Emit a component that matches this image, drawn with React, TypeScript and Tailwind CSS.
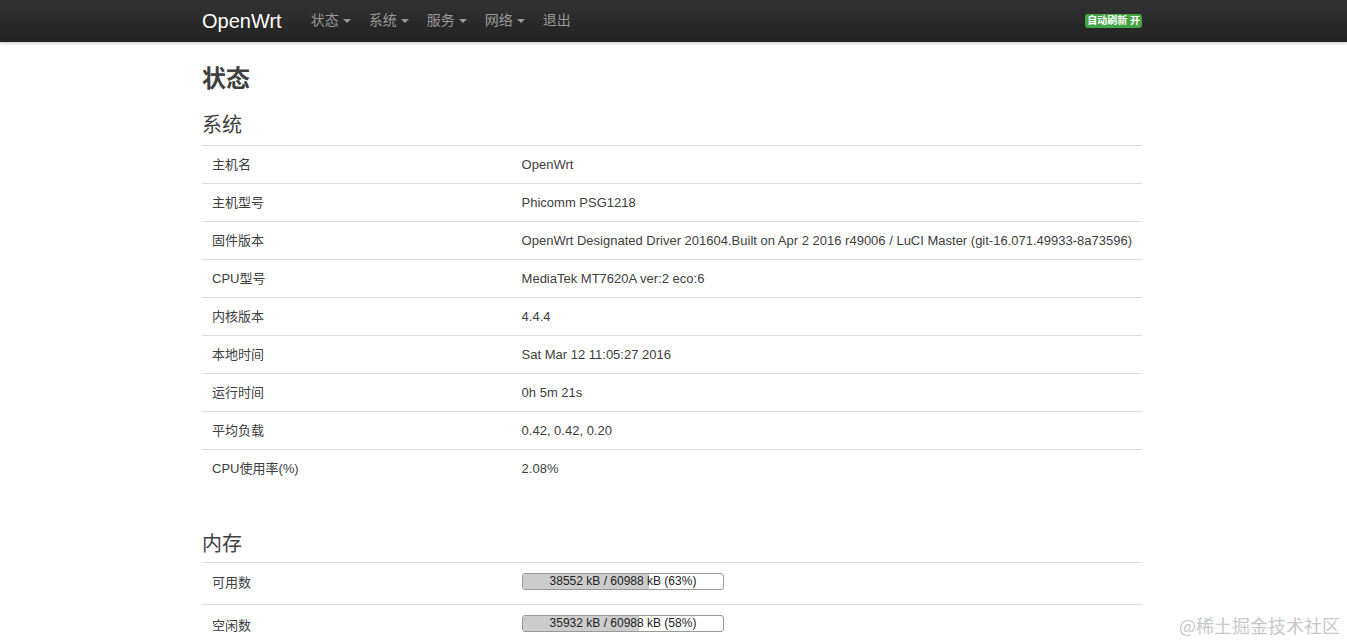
const systemRows = [
  ['主机名', 'OpenWrt'],
  ['主机型号', 'Phicomm PSG1218'],
  ['固件版本', 'OpenWrt Designated Driver 201604.Built on Apr 2 2016 r49006 / LuCI Master (git-16.071.49933-8a73596)'],
  ['CPU型号', 'MediaTek MT7620A ver:2 eco:6'],
  ['内核版本', '4.4.4'],
  ['本地时间', 'Sat Mar 12 11:05:27 2016'],
  ['运行时间', '0h 5m 21s'],
  ['平均负载', '0.42, 0.42, 0.20'],
  ['CPU使用率(%)', '2.08%'],
]

const memoryRows = [
  { label: '可用数', used: 38552, total: 60988 },
  { label: '空闲数', used: 35932, total: 60988 },
]

const menu = ['状态', '系统', '服务', '网络']

function Caret() {
  return (
    <span className="ml-[4px] inline-block h-0 w-0 border-x-[4px] border-t-[4px] border-x-transparent border-t-[#999] align-middle" />
  )
}

function Progress({ used, total }: { used: number; total: number }) {
  const pct = Math.floor((used / total) * 100)
  return (
    <div className="relative h-[17px] w-[202px] overflow-hidden rounded-[3px] border border-[#999] bg-white">
      <div className="absolute inset-y-0 left-0 bg-[#ccc]" style={{ width: `${pct}%` }} />
      <div className="relative text-center text-[12px] leading-[15px] text-[#222]">
        {used} kB / {total} kB ({pct}%)
      </div>
    </div>
  )
}

export default function App() {
  return (
    <div
      className="relative min-h-[640px] bg-white text-[#404040]"
      style={{ fontFamily: '"Liberation Sans", Arial, "Noto Sans CJK SC", sans-serif' }}
    >
      <div className="h-[42px] border-b border-[#252525] bg-gradient-to-b from-[#333] to-[#222] shadow-[0_1px_3px_rgba(0,0,0,0.25)]">
        <div className="ml-[202px] flex h-full w-[940px] items-center">
          <span className="mr-[29px] text-[20px] text-white">OpenWrt</span>
          <nav className="flex items-center gap-[18px] text-[14px] text-[#999]">
            {menu.map((m) => (
              <span key={m} className="flex items-center">
                {m}
                <Caret />
              </span>
            ))}
            <span>退出</span>
          </nav>
          <span className="ml-auto rounded-[3px] bg-[#46a546] px-[2px] text-[10px] font-bold leading-[14px] text-white">
            自动刷新 开
          </span>
        </div>
      </div>

      <main className="ml-[202px] w-[940px]">
        <h2 className="mt-[22px] text-[24px] font-bold leading-[30px]">状态</h2>
        <h3 className="mt-[18px] mb-[7px] text-[20px] leading-[26px]">系统</h3>
        <table className="w-full border-collapse text-[13px]">
          <tbody>
            {systemRows.map(([k, v]) => (
              <tr key={k} className="border-t border-[#ddd]">
                <td className="h-[38px] w-[310px] px-[10px] align-middle">{k}</td>
                <td className="h-[38px] whitespace-nowrap px-[10px] align-middle">{v}</td>
              </tr>
            ))}
          </tbody>
        </table>

        <h3 className="mt-[43px] mb-[5px] text-[20px] leading-[26px]">内存</h3>
        <table className="w-full border-collapse text-[13px]">
          <tbody>
            {memoryRows.map((r) => (
              <tr key={r.label} className="border-t border-[#ddd]">
                <td className="h-[42px] w-[310px] px-[10px] align-middle">{r.label}</td>
                <td className="h-[42px] px-[10px] pt-[10px] align-top">
                  <Progress used={r.used} total={r.total} />
                </td>
              </tr>
            ))}
          </tbody>
        </table>
      </main>

      <div
        className="absolute bottom-[10px] right-[7px] text-[18px] leading-[22px] text-[#c8c8c8]"
        style={{ fontFamily: '"Noto Sans CJK SC", serif' }}
      >
        @稀土掘金技术社区
      </div>
    </div>
  )
}
